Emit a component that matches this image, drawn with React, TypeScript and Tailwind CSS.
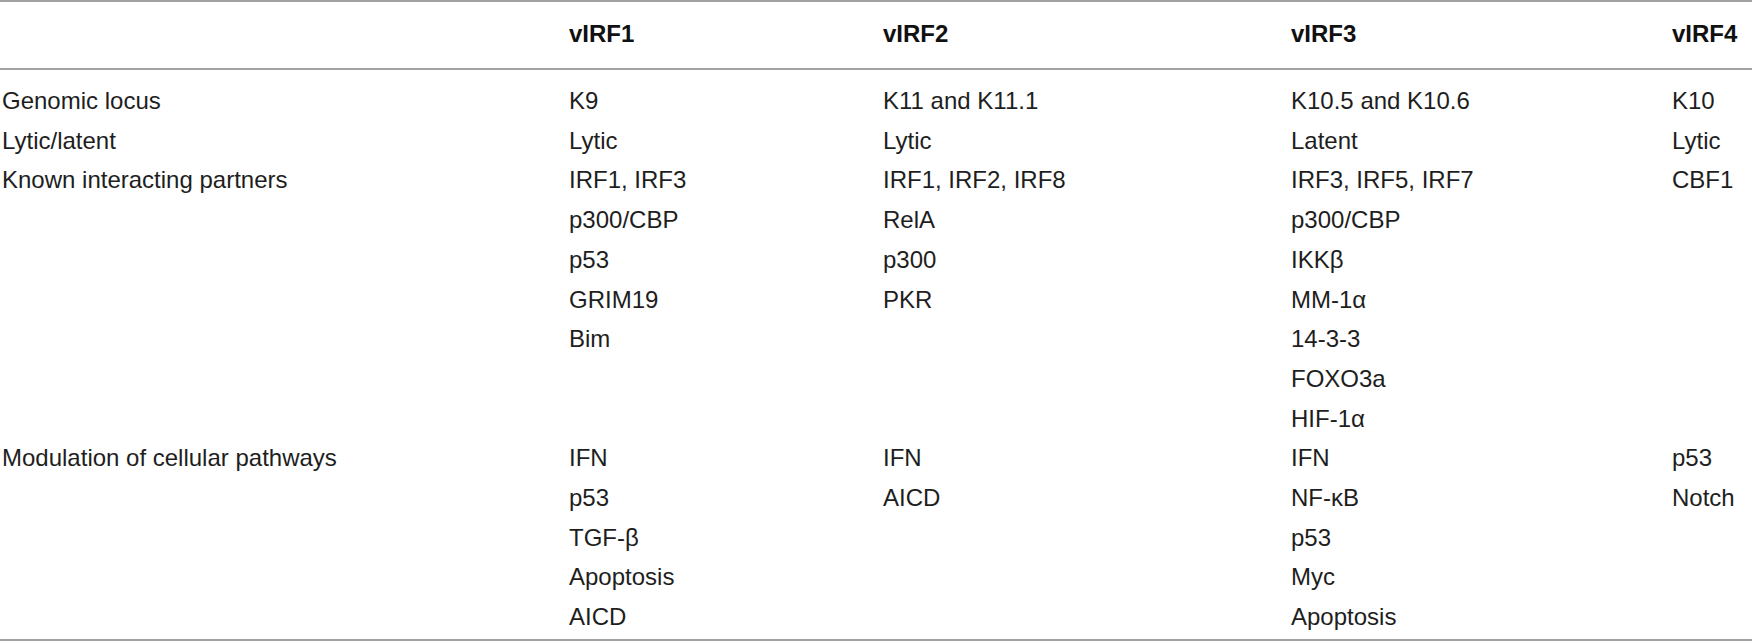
import React from "react";

type Group = {
  label: string;
  cells: string[][];
};

const groups: Group[] = [
  { label: "Genomic locus", cells: [["K9"], ["K11 and K11.1"], ["K10.5 and K10.6"], ["K10"]] },
  { label: "Lytic/latent", cells: [["Lytic"], ["Lytic"], ["Latent"], ["Lytic"]] },
  {
    label: "Known interacting partners",
    cells: [
      ["IRF1, IRF3", "p300/CBP", "p53", "GRIM19", "Bim"],
      ["IRF1, IRF2, IRF8", "RelA", "p300", "PKR"],
      ["IRF3, IRF5, IRF7", "p300/CBP", "IKKβ", "MM-1α", "14-3-3", "FOXO3a", "HIF-1α"],
      ["CBF1"],
    ],
  },
  {
    label: "Modulation of cellular pathways",
    cells: [
      ["IFN", "p53", "TGF-β", "Apoptosis", "AICD"],
      ["IFN", "AICD"],
      ["IFN", "NF-κB", "p53", "Myc", "Apoptosis"],
      ["p53", "Notch"],
    ],
  },
];

const gridCls = "grid grid-cols-[567px_314px_408px_381px_1fr] pl-[2px]";

export default function App() {
  return (
    <div
      className="w-[1752px] h-[644px] overflow-hidden bg-white text-[#1e1e1e]"
      style={{ fontFamily: '"Liberation Sans", Arial, sans-serif' }}
    >
      <div className="border-t-2 border-b-2 border-[#a2a2a2]">
        <div className={`${gridCls} pt-[11px] pb-[13px] text-[24px] leading-[42px] font-bold text-[#111]`}>
          <div></div>
          <div>vIRF1</div>
          <div>vIRF2</div>
          <div>vIRF3</div>
          <div className="whitespace-nowrap">vIRF4</div>
        </div>
      </div>
      <div className="h-[571px] border-b-2 border-[#a2a2a2] pt-[11px] text-[24px] leading-[39.7px] overflow-hidden">
        {groups.map((g) => (
          <div key={g.label} className={gridCls}>
            <div className="whitespace-nowrap">{g.label}</div>
            {g.cells.map((lines, i) => (
              <div key={i} className="flex flex-col whitespace-nowrap">
                {lines.map((l, j) => (
                  <div key={j}>{l}</div>
                ))}
              </div>
            ))}
          </div>
        ))}
      </div>
    </div>
  );
}
